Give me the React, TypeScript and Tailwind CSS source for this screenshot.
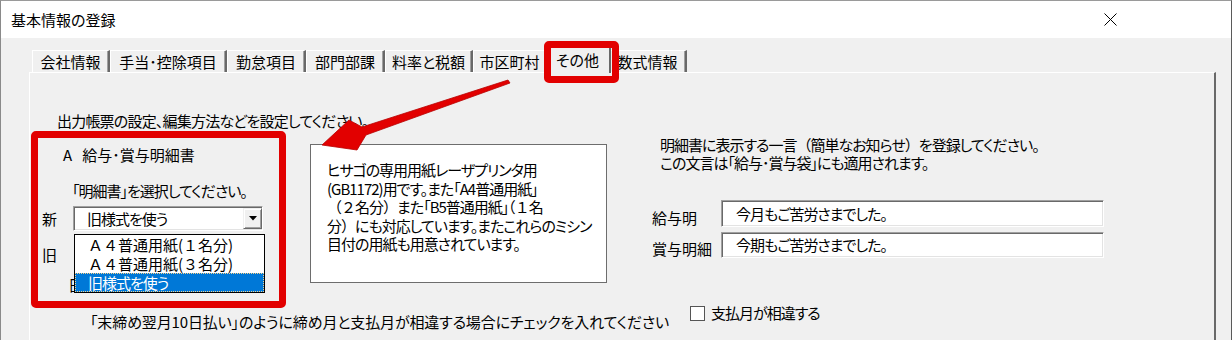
import React from "react";

const tabs = [
  { label: "会社情報", w: "w-[78px]" },
  { label: "手当･控除項目", w: "w-[117px]" },
  { label: "勤怠項目", w: "w-[79px]" },
  { label: "部門部課", w: "w-[79px]" },
  { label: "料率と税額", w: "w-[88px]" },
  { label: "市区町村", w: "w-[74px]" },
  { label: "その他", w: "w-[66px]", active: true },
  { label: "数式情報", w: "w-[78px]" },
];

const Tab = ({ label, w, active }: { label: string; w: string; active?: boolean }) =>
  active ? (
    <div
      className={`${w} relative z-10 -mx-[2px] mb-[-1px] h-[27px] flex justify-center pt-[4px] bg-[#f0f0f0] border-t border-l border-white border-r-2 border-r-[#696969] leading-[18px]`}
    >
      {label}
    </div>
  ) : (
    <div
      className={`${w} h-[22px] flex items-center justify-center bg-[#f0f0f0] border-t border-l border-white border-r-2 border-r-[#696969] shadow-[inset_-1px_0_0_#a0a0a0] leading-[18px]`}
    >
      {label}
    </div>
  );

const Sunken = ({ children, h }: { children: React.ReactNode; h: string }) => (
  <div
    className={`w-[383px] ${h} bg-white border border-t-[#a0a0a0] border-l-[#a0a0a0] border-r-white border-b-white shadow-[inset_1px_1px_0_#696969,inset_-1px_-1px_0_#e3e3e3] flex items-center pl-[14px] leading-[18px]`}
  >
    {children}
  </div>
);

const NoPalt = ({ children }: { children: React.ReactNode }) => (
  <span className="[font-feature-settings:normal]">{children}</span>
);

export default function App() {
  return (
    <div className="relative w-[1232px] h-[340px] overflow-hidden flex flex-col bg-[#f0f0f0] border-t border-l border-r border-t-[#9a9a9a] border-l-[#8a8a8a] border-r-[#5a5a5a] text-black text-[15px] font-['Noto_Sans_CJK_JP','Noto_Sans',sans-serif] [font-feature-settings:'palt']">
      {/* title bar */}
      <div className="h-[37px] shrink-0 bg-white flex items-center justify-between pl-[10px] pr-[114px]">
        <span className="leading-[18px]">基本情報の登録</span>
        <svg width="13" height="13" viewBox="0 0 13 13">
          <path d="M0.5 0.5 L12.5 12.5 M12.5 0.5 L0.5 12.5" stroke="#000" strokeWidth="1" />
        </svg>
      </div>

      <div className="flex-1 flex flex-col pt-[8px] pl-[28px] pr-[15px]">
        {/* tabs */}
        <div className="flex items-end h-[26px] pl-[3px] shrink-0">
          {tabs.map((t) => (
            <Tab key={t.label} {...t} />
          ))}
        </div>

        {/* panel */}
        <div className="flex-1 border-t border-l border-white border-r-2 border-r-[#696969] pt-[39px] tracking-[-1px]">
          <p className="ml-[27px] leading-[18px] tracking-[-0.8px]">出力帳票の設定、編集方法などを設定してください。</p>

          <div className="flex">
            {/* left column */}
            <div className="w-[280px] shrink-0 flex flex-col">
              <div className="ml-[33px] mt-[16px] leading-[18px] flex tracking-normal">
                <span>A</span>
                <span className="ml-[10px]">給与･賞与明細書</span>
              </div>
              <div className="ml-[42px] mt-[18px] leading-[18px]">「明細書」を選択してください。</div>
              <div className="mt-[6px] flex items-center">
                <span className="ml-[12px] leading-[18px]">新</span>
                <div className="relative ml-[17px] w-[190px] h-[25px] bg-white border border-t-[#a0a0a0] border-l-[#a0a0a0] border-r-white border-b-white shadow-[inset_1px_1px_0_#696969,inset_-1px_-1px_0_#e3e3e3] flex items-center">
                  <span className="flex-1 pl-[13px] leading-[18px]">旧様式を使う</span>
                  <div className="w-[19px] h-[21px] bg-[#f0f0f0] border border-t-[#f0f0f0] border-l-[#f0f0f0] border-r-[#696969] border-b-[#696969] shadow-[inset_1px_1px_0_#ffffff,inset_-1px_-1px_0_#a0a0a0] flex items-center justify-center">
                    <svg width="8" height="5" viewBox="0 0 8 5">
                      <polygon points="0,0 8,0 4,4.5" fill="#000" />
                    </svg>
                  </div>

                  {/* open dropdown list */}
                  <div className="absolute left-0 top-[27px] z-20 w-[191px] bg-white border border-black flex flex-col tracking-normal [font-feature-settings:normal]">
                    <div className="h-[19px] flex items-center pl-[13px] leading-[18px]">Ａ４普通用紙(１名分)</div>
                    <div className="h-[19px] flex items-center pl-[13px] leading-[18px]">Ａ４普通用紙(３名分)</div>
                    <div className="h-[19px] flex items-center pl-[12px] leading-[18px] bg-[#0078d7] text-white border border-dotted border-[#f5d08a] tracking-[-1px] [font-feature-settings:'palt']">
                      旧様式を使う
                    </div>
                  </div>
                </div>
              </div>
              <div className="ml-[12px] mt-[15px] leading-[18px]">旧</div>
              <div className="ml-[38px] mt-[12px] leading-[18px]">日付</div>
            </div>

            {/* description box */}
            <div className="mt-[14px] w-[297px] h-[139px] shrink-0 bg-white border border-[#6d6d6d] pl-[16px] pt-[16px] leading-[18.5px] whitespace-nowrap">
              <div>ヒサゴの専用用紙レーザプリンタ用</div>
              <div>(GB1172)用です。また「A4普通用紙」</div>
              <div>
                <NoPalt>（２名分）</NoPalt>また「B5普通用紙」<NoPalt>（１名</NoPalt>
              </div>
              <div>
                <NoPalt>分）</NoPalt>にも対応しています。またこれらのミシン
              </div>
              <div>目付の用紙も用意されています。</div>
            </div>

            {/* right column */}
            <div className="ml-[45px] flex flex-col">
              <div className="ml-[8px] mt-[6px] leading-[18px] whitespace-nowrap">
                <div>明細書に表示する一言<NoPalt>（</NoPalt>簡単なお知らせ<NoPalt>）</NoPalt>を登録してください。</div>
                <div>この文言は「給与･賞与袋」にも適用されます。</div>
              </div>
              <div className="mt-[28px] flex items-end">
                <span className="w-[69px] leading-[18px] tracking-normal">給与明</span>
                <Sunken h="h-[27px]">今月もご苦労さまでした。</Sunken>
              </div>
              <div className="mt-[5px] flex items-end">
                <span className="w-[69px] leading-[18px] tracking-normal">賞与明細</span>
                <Sunken h="h-[26px]">今期もご苦労さまでした。</Sunken>
              </div>
            </div>
          </div>

          {/* bottom row */}
          <div className="mt-[10px] flex items-end">
            <div className="ml-[60px] w-[600px] leading-[18px] whitespace-nowrap tracking-[-0.15px]">
              「末締め翌月10日払い」のように締め月と支払月が相違する場合にチェックを入れてください
            </div>
            <label className="mb-[9px] flex items-center gap-[6px] leading-[18px]">
              <span className="w-[15px] h-[15px] bg-white border border-[#555555]" />
              <span>支払月が相違する</span>
            </label>
          </div>
        </div>
      </div>

      {/* annotations */}
      <div className="absolute left-[543px] top-[40px] w-[75px] h-[42px] border-[7px] border-[#e20000] rounded-[5px] z-30 pointer-events-none" />
      <div className="absolute left-[30px] top-[130px] w-[255px] h-[177px] border-[7px] border-[#e20000] rounded-[5px] z-30 pointer-events-none" />
      <svg className="absolute left-0 top-0 z-30 pointer-events-none" width="1232" height="340" viewBox="0 0 1232 340">
        <polygon
          points="321,144 348,119 361,126 507,79 509,82 365,134 356,149"
          fill="#e20000"
          stroke="#b80000"
          strokeWidth="0.8"
          strokeLinejoin="round"
        />
      </svg>
    </div>
  );
}
